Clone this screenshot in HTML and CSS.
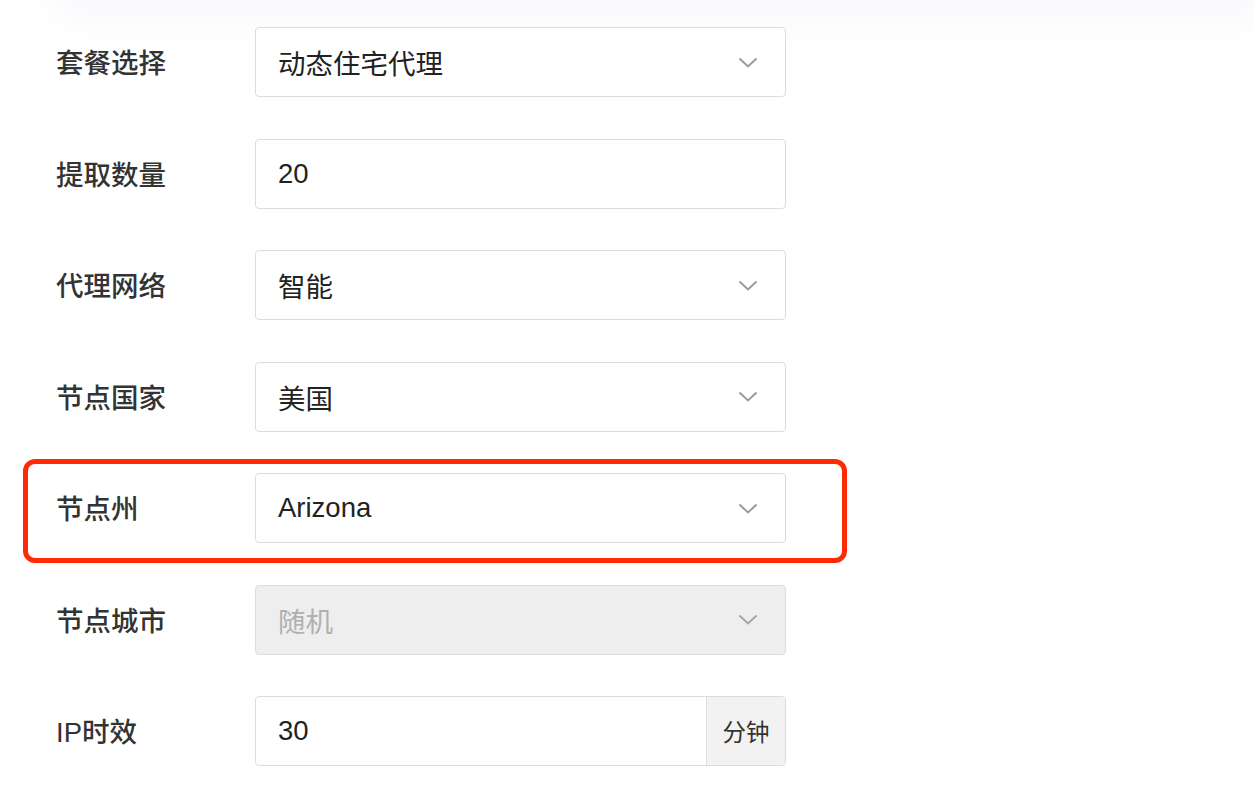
FILE: index.html
```html
<!DOCTYPE html>
<html lang="zh-CN">
<head>
<meta charset="utf-8">
<title>提取代理</title>
<link rel="stylesheet" href="styles.css">
</head>
<body>
<div class="topshade"></div>
<form class="form">
  <div class="row">
    <span class="label">套餐选择</span>
    <div class="control select"><span class="value">动态住宅代理</span><svg class="chev" viewBox="0 0 20 11"><path d="M1.5 1.5 L10 9.5 L18.5 1.5"/></svg></div>
  </div>
  <div class="row">
    <span class="label">提取数量</span>
    <div class="control"><span class="value">20</span></div>
  </div>
  <div class="row">
    <span class="label">代理网络</span>
    <div class="control select"><span class="value">智能</span><svg class="chev" viewBox="0 0 20 11"><path d="M1.5 1.5 L10 9.5 L18.5 1.5"/></svg></div>
  </div>
  <div class="row">
    <span class="label">节点国家</span>
    <div class="control select"><span class="value">美国</span><svg class="chev" viewBox="0 0 20 11"><path d="M1.5 1.5 L10 9.5 L18.5 1.5"/></svg></div>
  </div>
  <div class="row">
    <span class="label">节点州</span>
    <div class="control select"><span class="value">Arizona</span><svg class="chev" viewBox="0 0 20 11"><path d="M1.5 1.5 L10 9.5 L18.5 1.5"/></svg></div>
    <div class="mark"></div>
  </div>
  <div class="row">
    <span class="label">节点城市</span>
    <div class="control select disabled"><span class="value">随机</span><svg class="chev" viewBox="0 0 20 11"><path d="M1.5 1.5 L10 9.5 L18.5 1.5"/></svg></div>
  </div>
  <div class="row">
    <span class="label">IP时效</span>
    <div class="control group"><span class="value">30</span><span class="addon">分钟</span></div>
  </div>
</form>
</body>
</html>
```

FILE: styles.css
```css
html, body {
  margin: 0;
  padding: 0;
  background: #ffffff;
  overflow: hidden;
}

body {
  font-family: "Liberation Sans", "Noto Sans CJK SC", sans-serif;
  color: #222222;
}

.topshade {
  position: absolute;
  top: -50px;
  left: 70px;
  right: 0;
  height: 50px;
  box-shadow: 0 0 50px 12px rgba(40, 50, 130, 0.045);
}

.form {
  display: flex;
  flex-direction: column;
  gap: 41.5px;
  padding: 27px 0 0 56px;
}

.row {
  position: relative;
  display: grid;
  grid-template-columns: 199px 531px;
  align-items: center;
  height: 70px;
}

.label {
  font-size: 27.5px;
  font-weight: 500;
  color: #333333;
  margin-top: -2px;
}

.control {
  box-sizing: border-box;
  height: 70px;
  border: 1px solid #dcdcdc;
  border-radius: 4px;
  background: #ffffff;
  display: flex;
  align-items: center;
  padding-left: 22px;
  font-size: 27.5px;
  color: #222222;
}

.value {
  flex: 1;
}

.chev {
  width: 20px;
  height: 11px;
  margin-right: 27px;
  fill: none;
  stroke: #9a9a9a;
  stroke-width: 2;
}

.disabled {
  background: #eeeeee;
  color: #b0b0b0;
}

.disabled .chev {
  stroke: #a6a6a6;
}

.group {
  overflow: hidden;
  align-items: stretch;
}

.group .value {
  display: flex;
  align-items: center;
}

.addon {
  width: 78px;
  display: flex;
  align-items: center;
  justify-content: center;
  background: #f2f2f2;
  border-left: 1px solid #dddddd;
  font-size: 23.5px;
  color: #333333;
}

.mark {
  position: absolute;
  top: -14px;
  left: -33px;
  width: 824px;
  height: 104px;
  box-sizing: border-box;
  border: 5px solid #ff2a06;
  border-radius: 12px;
  pointer-events: none;
}
```
